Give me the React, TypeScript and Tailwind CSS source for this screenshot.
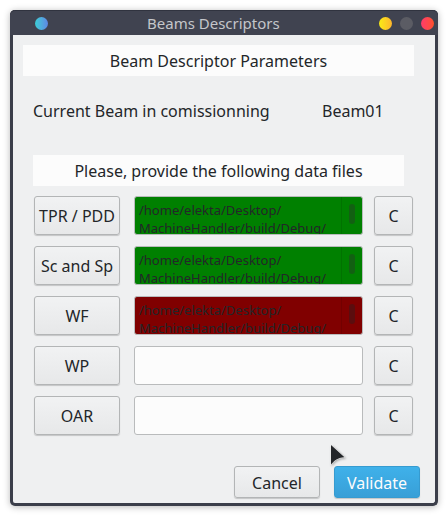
import React from "react";

type State = "ok" | "error" | "empty";

const rows: { label: string; state: State }[] = [
  { label: "TPR / PDD", state: "ok" },
  { label: "Sc and Sp", state: "ok" },
  { label: "WF", state: "error" },
  { label: "WP", state: "empty" },
  { label: "OAR", state: "empty" },
];

const fieldColor: Record<State, string> = {
  ok: "bg-[#008000]",
  error: "bg-[#800000]",
  empty: "bg-[#fcfcfc]",
};

const thumbColor: Record<State, string> = {
  ok: "bg-[#126012]",
  error: "bg-[#5b0d0e]",
  empty: "",
};

function Button({ className, children }: { className: string; children: React.ReactNode }) {
  return (
    <button
      className={
        "flex shrink-0 items-center justify-center whitespace-nowrap rounded-[3px] border shadow-[0_1px_1px_rgba(0,0,0,0.18)] " +
        className
      }
    >
      {children}
    </button>
  );
}

const plain = "border-[#b3b5b6] bg-linear-to-b from-[#f1f2f3] to-[#e7e8e9] text-[#232629]";

function FileField({ state }: { state: State }) {
  return (
    <div
      className={
        "ml-[14px] flex h-[39px] w-[229px] shrink-0 justify-between overflow-hidden rounded-[3px] border border-[#b9bbbc] " +
        fieldColor[state]
      }
    >
      {state !== "empty" && (
        <>
          <div className="pl-1 pt-1 text-[13px] leading-[18px] text-[#232629]">
            <div>/home/elekta/Desktop/</div>
            <div>MachineHandler/build/Debug/</div>
          </div>
          <div className="flex w-[21px] shrink-0 border-l border-black/10 pl-[7px] pt-[7px]">
            <div className={"h-5 w-[6px] rounded-full " + thumbColor[state]} />
          </div>
        </>
      )}
    </div>
  );
}

export default function App() {
  return (
    <div className="relative h-[516px] w-[448px] overflow-hidden bg-white p-[10px] font-['Noto_Sans',sans-serif] text-base text-[#232629]">
      <div className="flex h-[496px] w-[428px] flex-col rounded-[5px] border-[3px] border-t-0 border-[#3b3e4a] bg-[#eff0f1] shadow-[0_1px_7px_rgba(0,0,0,0.28)]">
        <header className="-mx-[3px] flex h-[25px] shrink-0 items-center rounded-t-[5px] border-t border-[#30333f] bg-[#404350] pl-[25px] pr-1 pt-px">
          <span className="h-[13px] w-[13px] rounded-full bg-linear-to-r from-[#38ced5] to-[#5d86e4]" />
          <h1 className="-mt-[2px] ml-[99px] w-[140px] whitespace-nowrap text-[15px] leading-5 text-[#c4c6ca]">Beams Descriptors</h1>
          <div className="ml-auto flex gap-2">
            <span className="h-[13px] w-[13px] rounded-full bg-linear-to-r from-[#f9eb12] to-[#fdb52b]" />
            <span className="h-[13px] w-[13px] rounded-full bg-[#5b5c64]" />
            <span className="h-[13px] w-[13px] rounded-full bg-linear-to-r from-[#ff3b69] to-[#ff5026]" />
          </div>
        </header>
        <main className="flex flex-col">
          <h2 className="ml-[10px] mt-[10px] flex h-[31px] w-[391px] items-center justify-center bg-[#fcfcfc]">
            Beam Descriptor Parameters
          </h2>
          <div className="mt-[24px] flex h-[22px] items-center whitespace-nowrap pl-5">
            <span className="w-[289px]">Current Beam in comissionning</span>
            <span>Beam01</span>
          </div>
          <h2 className="ml-5 mt-[33px] flex h-[31px] w-[371px] items-center justify-center bg-[#fcfcfc]">
            Please, provide the following data files
          </h2>
          <div className="ml-[21px] mt-[10px] flex flex-col gap-[11px]">
            {rows.map((row) => (
              <div key={row.label} className="flex">
                <Button className={plain + " h-[39px] w-[86px]"}>{row.label}</Button>
                <FileField state={row.state} />
                <Button className={plain + " ml-[11px] h-[39px] w-[39px]"}>C</Button>
              </div>
            ))}
          </div>
          <footer className="ml-[221px] mt-[31px] flex gap-[14px]">
            <Button className={plain + " h-8 w-[86px] pt-[2px]"}>Cancel</Button>
            <Button className="h-8 w-[86px] border-[#369bd0] bg-linear-to-b from-[#3fb1ea] to-[#389fd7] pt-[2px] text-[#fcfcfc]">
              Validate
            </Button>
          </footer>
        </main>
      </div>
      <svg
        className="absolute left-[328px] top-[442px] drop-shadow-[1px_1px_1px_rgba(0,0,0,0.3)]"
        width="20"
        height="26"
        viewBox="0 0 20 26"
      >
        <path d="M3 3 L16.5 15.3 Q8 15.5 3 22.5 Z" fill="#232629" stroke="#f4f4f4" strokeWidth="1" paintOrder="stroke" />
      </svg>
    </div>
  );
}
